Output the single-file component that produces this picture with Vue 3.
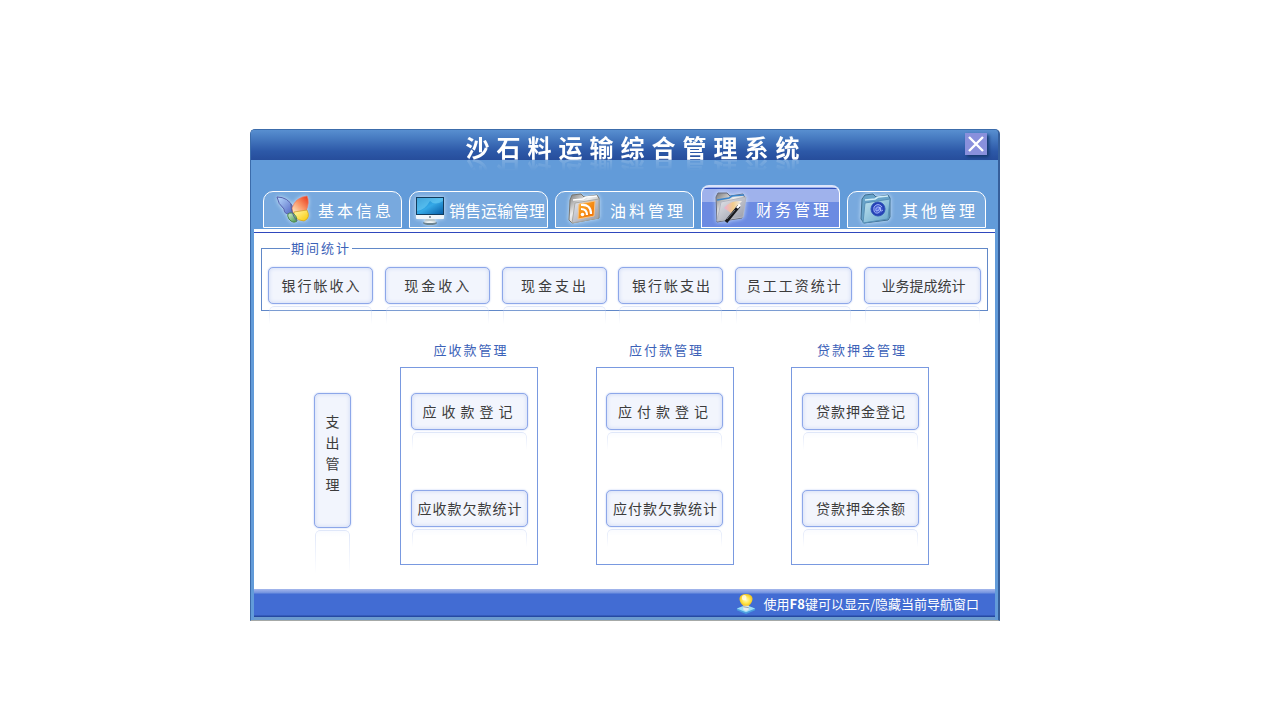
<template>
  <main class="desktop">
    <section class="window" aria-labelledby="app-title">
      <header class="titlebar">
        <h1 id="app-title" class="title">沙石料运输综合管理系统</h1>
        <button class="close" type="button" aria-label="关闭">
          <svg width="22" height="22" viewBox="0 0 22 22" fill="none" stroke="#fff" stroke-width="2.4">
            <path d="M4 4 L18 18 M18 4 L4 18" />
          </svg>
        </button>
      </header>

      <nav class="tabs">
        <button
          v-for="tab in tabs"
          :key="tab.id"
          type="button"
          class="tab"
          :class="{ active: tab.id === current, wide: tab.id === 'sales' }"
          @click="current = tab.id"
        >
          <svg class="tab-icon" viewBox="0 0 36 36" fill="none" aria-hidden="true">
            <!-- 蝴蝶 -->
            <g v-if="tab.id === 'base'">
              <path d="M2 5 Q13 5 18 15 L19 23 Q18 25 14 22 Q9 22 9 17 Q3 12 2 5Z" fill="url(#wing-blue)" stroke="#5661ad" />
              <path d="M17 16 Q21 5 32 4 Q35 10 31 19 L18 21Z" fill="url(#wing-red)" stroke="#ed7760" stroke-width=".7" />
              <path d="M19 20 L32 18 Q36 26 29 29 Q23 29 19 24Z" fill="url(#wing-yellow)" stroke="#c99b21" stroke-width=".7" />
              <path d="M18 21 Q10 20 14 27 Q18 32 22 29 Q22 24 18 21Z" fill="url(#wing-green)" stroke="#4c884e" />
              <path d="M16 12 Q16 22 22 29" stroke="#596294" />
            </g>
            <!-- 显示器 -->
            <g v-else-if="tab.id === 'sales'">
              <path d="M14 26 H22 L24 31 H12Z" fill="#bcc9cd" />
              <ellipse cx="18" cy="31" rx="7" ry="2" fill="#6b8391" />
              <ellipse cx="18" cy="30" rx="6" ry="1" fill="#edf3f5" />
              <rect x="4" y="5" width="28" height="22" rx="1" fill="#f0f6fb" />
              <rect x="4" y="5" width="28" height="18" fill="#123c5e" />
              <rect x="5" y="6" width="26" height="16" fill="url(#screen)" />
              <path d="M5 19 Q13 18 18 9 Q23 14 31 9 V6 H5Z" fill="#8de5ff" opacity=".38" />
              <circle cx="18" cy="25" r="1" fill="#72818b" />
            </g>
            <!-- 订阅文件夹 -->
            <g v-else-if="tab.id === 'oil'">
              <path d="M3 8 L5 3 L14 2 L17 5 L30 3 L32 6 V26 L5 31 L2 28Z" fill="url(#silver)" stroke="#77756f" />
              <path d="M6 8 L16 7 L19 5 L30 4" stroke="#fff" stroke-width="1.6" />
              <path d="M8 11 L32 7 L31 26 L5 31Z" fill="url(#folder-gray)" stroke="#aaa9a4" />
              <path d="M12 12 L28 9 L27 24 L11 27Z" fill="url(#orange)" stroke="#f7c384" />
              <circle cx="15.5" cy="22.5" r="1.8" fill="#fff" />
              <path d="M14 17 Q20 17 20 23 M14 13 Q24 12 24 22" stroke="#fff" stroke-width="2.2" />
            </g>
            <!-- 魔棒文件夹 -->
            <g v-else-if="tab.id === 'finance'">
              <path d="M3 6 L5 2 L14 2 L17 5 L30 3 L32 7 L29 27 L4 31Z" fill="url(#silver)" stroke="#696d7e" />
              <path d="M4 9 L16 7 L19 5 L31 4" stroke="#3b86cc" stroke-width="1.6" />
              <path d="M8 11 L33 6 L30 26 L4 30Z" fill="url(#folder-gray)" stroke="#b3b6c0" />
              <path d="M11 17 Q17 9 29 10 L18 22Z" fill="url(#rainbow)" opacity=".8" />
              <path d="M13 31 L26 15" stroke="#17181c" stroke-width="3.4" />
              <path d="M24 17 L27 13.500" stroke="#fff" stroke-width="2.4" />
              <path d="M14 28 L22 19" stroke="#74777f" />
            </g>
            <!-- 网络文件夹 -->
            <g v-else>
              <path d="M3 7 L6 3 L14 2 L17 5 L29 3 L31 6 V25 L29 28 L5 31 L2 27Z" fill="#67a3c9" stroke="#3e6d90" />
              <path d="M6 8 L16 7 L19 5 L29 4" stroke="#d1eef9" stroke-width="1.6" />
              <path d="M6 11 L31 7 L29 27 L4 31Z" fill="url(#folder-blue)" stroke="#5790b8" />
              <circle cx="19" cy="17" r="7" fill="url(#globe)" stroke="#3156ba" />
              <path d="M23 15 Q19 10 15 15 Q14 22 19 21 Q24 18 20 15 Q16 15 17 19 Q20 20 21 15 Q21 21 24 18" stroke="#b5c7ff" stroke-width=".8" />
            </g>
          </svg>
          <span>{{ tab.name }}</span>
        </button>
      </nav>

      <div class="content">
        <fieldset class="period">
          <legend>期间统计</legend>
          <div class="period-row">
            <button
              v-for="item in periodItems"
              :key="item.name"
              type="button"
              class="btn"
              :class="[item.size, item.track]"
            >{{ item.name }}</button>
          </div>
        </fieldset>

        <div class="lower">
          <button type="button" class="btn vertical">支出管理</button>
          <div class="groups">
            <section v-for="group in groups" :key="group.title" class="group">
              <h2>{{ group.title }}</h2>
              <div class="group-box">
                <button
                  v-for="item in group.items"
                  :key="item.name"
                  type="button"
                  class="btn large"
                  :class="item.track"
                >{{ item.name }}</button>
              </div>
            </section>
          </div>
        </div>
      </div>

      <footer class="statusbar">
        <svg width="20" height="20" viewBox="0 0 22 22" aria-hidden="true">
          <path d="M1 16 L11 12 L21 16 V18 L11 22 L1 18Z" fill="#4b9ee0" />
          <path d="M1 16 L11 12 L21 16 L11 20Z" fill="#9cddf7" />
          <path d="M8 12 H14 V17 Q11 20 8 17Z" fill="#e6eced" />
          <path d="M8 14 L14 15" stroke="#8998a4" />
          <path d="M11 0 C2 0 2 8 8 13 H14 C20 8 20 0 11 0Z" fill="url(#bulb)" />
          <ellipse cx="9" cy="4" rx="2.5" ry="3" fill="#fff" opacity=".7" />
        </svg>
        <span>使用<b>F8</b>键可以显示/隐藏当前导航窗口</span>
      </footer>
    </section>

    <svg class="defs" width="0" height="0" aria-hidden="true">
      <defs>
        <linearGradient id="wing-blue" x2="1" y2="1"><stop stop-color="#b9ddff" /><stop offset="1" stop-color="#4959bd" /></linearGradient>
        <linearGradient id="wing-red" x1="1" x2="0" y2="1"><stop stop-color="#e83217" /><stop offset=".5" stop-color="#f99364" /><stop offset="1" stop-color="#fff0c8" /></linearGradient>
        <linearGradient id="wing-yellow" x2="1" y2="1"><stop stop-color="#fff7b0" /><stop offset="1" stop-color="#f9c900" /></linearGradient>
        <linearGradient id="wing-green" x2="1" y2="1"><stop stop-color="#d8f1d6" /><stop offset="1" stop-color="#409348" /></linearGradient>
        <linearGradient id="screen" x2="1" y2="1"><stop stop-color="#127dc5" /><stop offset=".5" stop-color="#35a9e7" /><stop offset="1" stop-color="#075ea9" /></linearGradient>
        <linearGradient id="silver" x2="1" y2="1"><stop stop-color="#777" /><stop offset=".4" stop-color="#eee" /><stop offset="1" stop-color="#85827d" /></linearGradient>
        <linearGradient id="orange" x2="1" y2="1"><stop stop-color="#ffb12c" /><stop offset="1" stop-color="#ed6900" /></linearGradient>
        <linearGradient id="folder-gray" x2="1" y2="1"><stop stop-color="#e9eaef" /><stop offset="1" stop-color="#9296a4" /></linearGradient>
        <linearGradient id="rainbow"><stop stop-color="#f3a5d6" /><stop offset=".5" stop-color="#ffce79" /><stop offset="1" stop-color="#fff" /></linearGradient>
        <linearGradient id="folder-blue" x2="1" y2="1"><stop stop-color="#c0e4ef" /><stop offset="1" stop-color="#65a5cb" /></linearGradient>
        <radialGradient id="globe"><stop stop-color="#647af0" /><stop offset="1" stop-color="#1834a8" /></radialGradient>
        <radialGradient id="bulb"><stop stop-color="#fffac0" /><stop offset=".6" stop-color="#ffe64a" /><stop offset="1" stop-color="#f1c322" /></radialGradient>
      </defs>
    </svg>
  </main>
</template>

<script setup>
import { ref } from 'vue'

const current = ref('finance')

const tabs = [
  { id: 'base', name: '基本信息' },
  { id: 'sales', name: '销售运输管理' },
  { id: 'oil', name: '油料管理' },
  { id: 'finance', name: '财务管理' },
  { id: 'other', name: '其他管理' },
]

const periodItems = [
  { name: '银行帐收入', size: 'small', track: 'track-2' },
  { name: '现金收入', size: 'small', track: 'track-3' },
  { name: '现金支出', size: 'small', track: 'track-3' },
  { name: '银行帐支出', size: 'small', track: 'track-2' },
  { name: '员工工资统计', size: 'large', track: 'track-2' },
  { name: '业务提成统计', size: 'large', track: '' },
]

const groups = [
  {
    title: '应收款管理',
    items: [
      { name: '应收款登记', track: 'track-5' },
      { name: '应收款欠款统计', track: 'track-1' },
    ],
  },
  {
    title: '应付款管理',
    items: [
      { name: '应付款登记', track: 'track-5' },
      { name: '应付款欠款统计', track: 'track-1' },
    ],
  },
  {
    title: '贷款押金管理',
    items: [
      { name: '贷款押金登记', track: 'track-1' },
      { name: '贷款押金余额', track: 'track-1' },
    ],
  },
]
</script>

<style>
body {
  background: #fff;
}
</style>

<style scoped>
.desktop {
  padding: 129px 16px 16px 250px;
  font-family: "Noto Sans CJK SC", sans-serif;
  font-weight: 400;
}

.desktop *,
.desktop *::after {
  box-sizing: border-box;
}

button {
  padding: 0;
  font: inherit;
  cursor: pointer;
}

.window {
  max-width: 750px;
  border: 1px solid #3c6cab;
  border-right: 2px solid #365f9b;
  border-bottom-color: #a6a9a7;
  border-radius: 5px 5px 0 0;
  background: #629bd9;
}

/* 标题栏 */
.titlebar {
  display: flex;
  align-items: flex-start;
  height: 30px;
  padding-right: 11px;
  border-radius: 4px 4px 0 0;
  background: linear-gradient(#588fd0 0, #4b80c5 20%, #2d59a8 70%, #264d9b 100%);
}

.title {
  flex: 1;
  margin: 0;
  padding-left: 56px;
  color: #fff;
  font-size: 24px;
  font-weight: 700;
  line-height: 34px;
  letter-spacing: 7px;
  text-align: center;
  white-space: nowrap;
  -webkit-box-reflect: below -10px linear-gradient(transparent 50%, rgba(255, 255, 255, 0.25));
}

.close {
  display: block;
  width: 22px;
  height: 22px;
  margin-top: 3px;
  border: 0;
  background: #8990dc;
  box-shadow: 2px 2px 3px #15396f;
}

.close svg {
  display: block;
}

/* 导航标签 */
.tabs {
  display: grid;
  grid-template-columns: repeat(5, minmax(0, 1fr));
  align-items: end;
  gap: 7px;
  padding: 25px 12px 1px;
}

.tab {
  display: flex;
  align-items: center;
  gap: 7px;
  height: 37px;
  padding-left: 11px;
  border: 1px solid #fff;
  border-radius: 10px 10px 0 0;
  background: #78a9de;
  color: #fff;
  font-size: 16px;
  letter-spacing: 3px;
  white-space: nowrap;
}

.tab.wide {
  gap: 1px;
  padding-left: 2px;
  letter-spacing: 0;
}

.tab.active {
  height: 43px;
  padding-top: 4px;
  border-top-width: 2px;
  border-top-color: #dce4fa;
  border-radius: 8px 8px 0 0;
  background: linear-gradient(#9fb2ec 0 1px, #3151bb 1px 2px, #9fb2ec 2px 15px, #6c8be2 15px);
}

.tab-icon {
  flex: none;
  width: 36px;
  height: 36px;
  filter: drop-shadow(0 0 2px rgba(225, 244, 255, 0.8));
}

/* 内容区 */
.content {
  margin: 0 3px;
  padding: 8px 7px 0;
  border-top: 3px solid #fff;
  background: linear-gradient(#2f48bd 0 1px, #fff 1px);
}

.period {
  min-width: 0;
  margin: 0;
  padding: 11px 6px 6px;
  border: 1px solid #6188c8;
}

.period legend {
  margin-left: 22px;
  padding: 0 1px;
  color: #3c62b8;
  font-size: 13px;
  line-height: 16px;
  letter-spacing: 2px;
}

.period-row {
  display: flex;
  justify-content: space-between;
}

.btn {
  position: relative;
  height: 37px;
  padding: 0 0 2px 2px;
  border: 1px solid #8da7e9;
  border-radius: 5px;
  background: #f2f5fd;
  box-shadow: 0 0 2px #b7c9f5, inset 0 0 4px #cbd6f4;
  color: #3c3c3c;
  font-size: 14px;
  line-height: 20px;
  white-space: nowrap;
}

/* 按钮倒影 */
.btn::after {
  content: "";
  position: absolute;
  top: 38px;
  left: 0;
  right: 0;
  height: 18px;
  border: 1px solid #c9d6f5;
  border-bottom: 0;
  border-radius: 5px 5px 0 0;
  background: linear-gradient(#f5f8ff, transparent 6px);
  mask-image: linear-gradient(rgba(0, 0, 0, 0.6), transparent);
  pointer-events: none;
}

.small {
  width: 105px;
}

.large {
  width: 117px;
}

.track-1 {
  letter-spacing: 1px;
}

.track-2 {
  letter-spacing: 2px;
}

.track-3 {
  letter-spacing: 3px;
}

.track-5 {
  letter-spacing: 5px;
}

.lower {
  display: flex;
  gap: 49px;
  padding: 29px 59px 24px 53px;
}

.vertical {
  width: 37px;
  height: 135px;
  margin-top: 53px;
  padding: 0 0 8px;
  line-height: 32px;
  letter-spacing: 7px;
  writing-mode: vertical-rl;
}

.vertical::after {
  top: 136px;
  height: 44px;
}

.groups {
  display: flex;
  flex: 1;
  justify-content: space-between;
}

.group h2 {
  margin: 0 0 7px;
  padding-left: 4px;
  color: #3c62b8;
  font-size: 13px;
  font-weight: 400;
  line-height: 20px;
  letter-spacing: 2px;
  text-align: center;
}

.group-box {
  display: flex;
  flex-direction: column;
  align-items: center;
  gap: 60px;
  width: 138px;
  padding: 25px 0 37px;
  border: 1px solid #7999e0;
}

/* 状态栏 */
.statusbar {
  display: flex;
  align-items: center;
  justify-content: flex-end;
  gap: 8px;
  height: 31px;
  margin: 0 3px;
  padding: 2px 16px 0 0;
  border-bottom: 3px solid #6c9bce;
  background: linear-gradient(#a6b8ec 0, #7192df 4px, #426cd3 5px, #426cd3 26px, #2549a2 27px);
  color: #fff;
  font-size: 13px;
  line-height: 20px;
}

.statusbar b {
  font-weight: 700;
}

.defs {
  position: absolute;
}
</style>
